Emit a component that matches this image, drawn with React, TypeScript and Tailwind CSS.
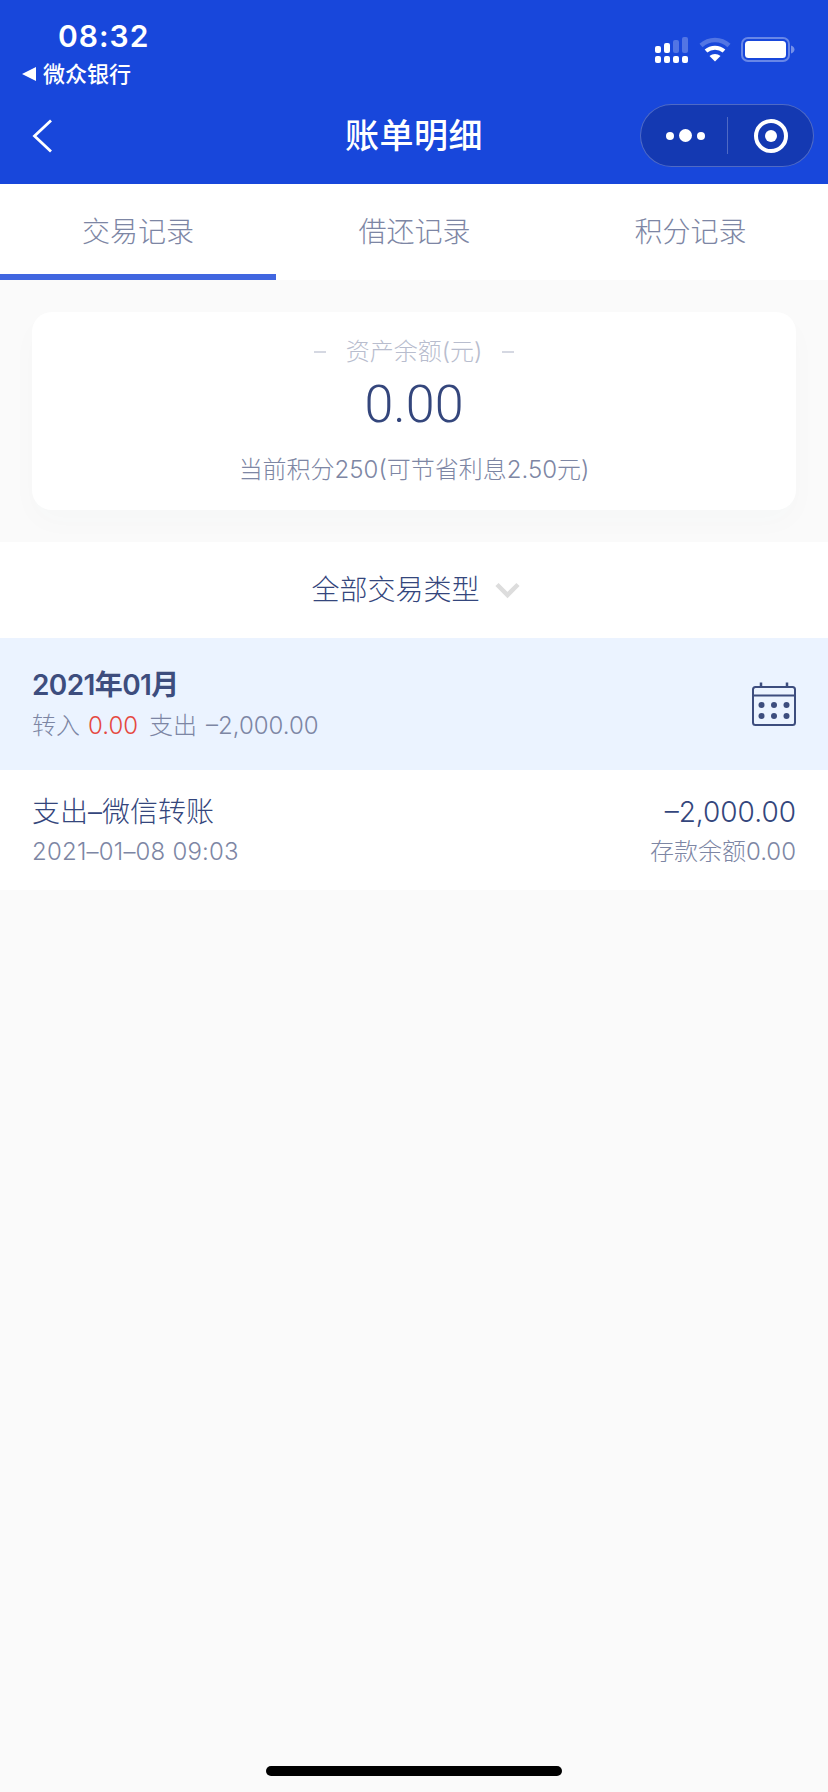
const font = "font-['Inter','Noto_Sans_CJK_SC',sans-serif]";

function SignalIcon() {
  return (
    <svg width="34" height="26" viewBox="0 0 34 26" fill="#fff">
      <rect x="0" y="9" width="6" height="7" rx="2" />
      <rect x="9" y="6" width="6" height="10" rx="2" />
      <rect x="18" y="3" width="6" height="13" rx="2" fillOpacity="0.25" />
      <rect x="27" y="0" width="6" height="16" rx="2" fillOpacity="0.25" />
      <rect x="0" y="19" width="6" height="7" rx="2" />
      <rect x="9" y="19" width="6" height="7" rx="2" />
      <rect x="18" y="19" width="6" height="7" rx="2" />
      <rect x="27" y="19" width="6" height="7" rx="2" />
    </svg>
  );
}

function WifiIcon() {
  return (
    <svg width="32" height="25" viewBox="0 0 32 25" fill="none">
      <path d="M2 8.5C10 1 22 1 30 8.5" stroke="#fff" strokeOpacity="0.25" strokeWidth="4.5" />
      <path d="M7 14C12 9.5 20 9.5 25 14" stroke="#fff" strokeWidth="4" />
      <path d="M16 24.5L10.5 19C13.5 16.2 18.5 16.2 21.5 19Z" fill="#fff" />
    </svg>
  );
}

function BatteryIcon() {
  return (
    <svg width="54" height="25" viewBox="0 0 54 25" fill="none">
      <rect x="1" y="1" width="47" height="23" rx="6" stroke="#fff" strokeOpacity="0.35" strokeWidth="2" />
      <rect x="4" y="4" width="41" height="17" rx="3.5" fill="#fff" />
      <path d="M50 8.5C52.5 9.5 53.5 11 53.5 12.5C53.5 14 52.5 15.5 50 16.5Z" fill="#fff" fillOpacity="0.4" />
    </svg>
  );
}

function CalendarIcon() {
  return (
    <svg width="44" height="44" viewBox="0 0 44 44" fill="none" stroke="#3D4D7E">
      <rect x="1" y="5" width="42" height="38" rx="2.5" strokeWidth="2" />
      <path d="M1 13.5H43" strokeWidth="2" />
      <path d="M9 0.5V5M35 0.5V5" strokeWidth="2.5" />
      <g fill="#3D4D7E" stroke="none">
        <circle cx="9.5" cy="23" r="3" />
        <circle cx="22" cy="23" r="3" />
        <circle cx="34.5" cy="23" r="3" />
        <circle cx="9.5" cy="34" r="3" />
        <circle cx="22" cy="34" r="3" />
        <circle cx="34.5" cy="34" r="3" />
      </g>
    </svg>
  );
}

export default function App() {
  return (
    <div className={`relative flex h-[1792px] w-[828px] flex-col overflow-hidden bg-[#FAFAFA] ${font}`}>
      {/* Blue header */}
      <header className="h-[184px] bg-[#1847DB] text-white">
        <div className="flex h-[88px] justify-between">
          <div className="pl-[22px] pt-[17px]">
            <div className="pl-[36px] text-[30px] font-semibold leading-[38px] tracking-[1px]">08:32</div>
            <div className="mt-[5px] flex items-center gap-[7px] text-[22px] font-medium leading-[28px]">
              <span className="h-0 w-0 border-y-[7px] border-r-[14px] border-y-transparent border-r-white" />
              <span>微众银行</span>
            </div>
          </div>
          <div className="flex items-start gap-[10px] pr-[33px] pt-[37px]">
            <SignalIcon />
            <WifiIcon />
            <BatteryIcon />
          </div>
        </div>
        <div className="relative flex h-[96px] items-center justify-center">
          <svg className="absolute left-[32px] top-[31px]" width="20" height="34" viewBox="0 0 20 34" fill="none">
            <path d="M19 1.5L2.5 17L19 32.5" stroke="#fff" strokeWidth="2.8" />
          </svg>
          <span className="text-[34px] font-medium leading-[48px] tracking-[0.5px]">账单明细</span>
          <div className="absolute left-[640px] top-[16px] flex h-[63px] w-[174px] items-center rounded-full border border-white/25 bg-[#1439B2]">
            <div className="flex w-[86px] items-center justify-center gap-[5px] pl-[3px]">
              <span className="h-[8px] w-[8px] rounded-full bg-white" />
              <span className="h-[13px] w-[13px] rounded-full bg-white" />
              <span className="h-[8px] w-[8px] rounded-full bg-white" />
            </div>
            <span className="h-[37px] w-px bg-white/25" />
            <div className="flex flex-1 items-center justify-center">
              <span className="flex h-[34px] w-[34px] items-center justify-center rounded-full border-[4px] border-white">
                <span className="h-[12px] w-[12px] rounded-full bg-white" />
              </span>
            </div>
          </div>
        </div>
      </header>

      {/* Tabs */}
      <nav className="grid h-[96px] grid-cols-3 bg-white text-[28px] font-light text-[#7D86A4]">
        <div className="relative flex items-center justify-center">
          交易记录
          <span className="absolute bottom-0 left-0 h-[6px] w-full bg-[#4166E0]" />
        </div>
        <div className="flex items-center justify-center pl-[1px]">借还记录</div>
        <div className="flex items-center justify-center pl-[1px]">积分记录</div>
      </nav>

      {/* Balance card */}
      <section className="h-[262px] px-[32px] pt-[32px]">
        <div className="flex h-[198px] flex-col items-center rounded-[20px] bg-white pt-[22px] shadow-[0_12px_30px_rgba(61,77,126,0.02)]">
          <div className="flex items-center text-[24px] font-light leading-[36px] text-[#B8BDCE]">
            <span className="h-[2px] w-[12px] bg-[#D5D8E2]" />
            <span className="mx-[20px]">资产余额(元)</span>
            <span className="h-[2px] w-[12px] bg-[#D5D8E2]" />
          </div>
          <div className="mt-[5px] font-['Roboto'] text-[52px] font-light leading-[60px] text-[#34467C]">0.00</div>
          <div className="mt-[17px] text-[24px] font-light leading-[36px] text-[#7D86A4]">当前积分250(可节省利息2.50元)</div>
        </div>
      </section>

      {/* Type filter */}
      <div className="flex h-[96px] items-center justify-center gap-[15px] bg-white pl-[3px] text-[28px] font-light text-[#34467C]">
        <span>全部交易类型</span>
        <svg width="25" height="17" viewBox="0 0 25 17" fill="none">
          <path d="M2 2.5L12.5 13L23 2.5" stroke="#DDDDDD" strokeWidth="4.5" />
        </svg>
      </div>

      {/* Month header */}
      <div className="flex h-[132px] items-start justify-between bg-[#EBF3FF] px-[32px] pt-[28px]">
        <div>
          <div className="text-[28px] font-semibold leading-[38px] tracking-[-0.6px] text-[#3D4D7E]">2021年01月</div>
          <div className="mt-[4px] flex text-[24px] font-light leading-[36px] text-[#7D86A4]">
            <span>转入</span>
            <span className="ml-[8px] text-[#E5483F]">0.00</span>
            <span className="ml-[11px]">支出</span>
            <span className="ml-[9px]">–2,000.00</span>
          </div>
        </div>
        <div className="self-center pb-[28px]">
          <CalendarIcon />
        </div>
      </div>

      {/* Transaction */}
      <div className="flex h-[120px] items-start justify-between bg-white px-[32px] pt-[22px]">
        <div>
          <div className="text-[28px] font-light leading-[40px] text-[#34467C]">支出–微信转账</div>
          <div className="mt-[2px] text-[24px] font-light leading-[36px] tracking-[0.2px] text-[#7D86A4]">2021–01–08 09:03</div>
        </div>
        <div className="text-right">
          <div className="text-[28px] font-light leading-[40px] text-[#34467C]">–2,000.00</div>
          <div className="mt-[2px] text-[24px] font-light leading-[36px] text-[#7D86A4]">存款余额0.00</div>
        </div>
      </div>

      {/* Home indicator */}
      <div className="absolute bottom-[16px] left-[266px] h-[10px] w-[296px] rounded-full bg-black" />
    </div>
  );
}
